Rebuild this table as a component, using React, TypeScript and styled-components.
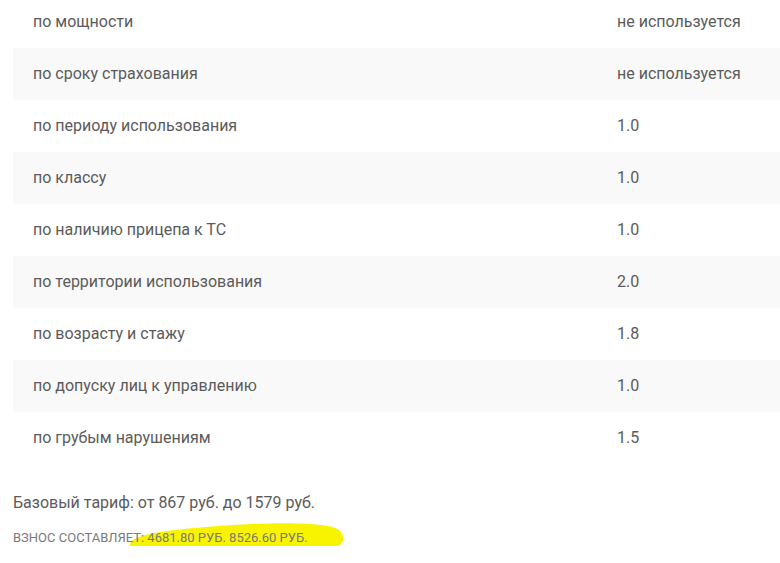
import React from 'react';
import styled, { createGlobalStyle } from "styled-components";

const rows = [
  { name: "по мощности", value: "не используется" },
  { name: "по сроку страхования", value: "не используется" },
  { name: "по периоду использования", value: "1.0" },
  { name: "по классу", value: "1.0" },
  { name: "по наличию прицепа к ТС", value: "1.0" },
  { name: "по территории использования", value: "2.0" },
  { name: "по возрасту и стажу", value: "1.8" },
  { name: "по допуску лиц к управлению", value: "1.0" },
  { name: "по грубым нарушениям", value: "1.5" },
];

const App = () => {
  return (
    <Page>
      <GlobalStyle/>
      <Table>
        <tbody>
          {rows.map((row, i) => (
            <Row key={row.name} $shaded={i % 2 === 1}>
              <NameCell>{row.name}</NameCell>
              <ValueCell>{row.value}</ValueCell>
            </Row>
          ))}
        </tbody>
      </Table>
      <BaseTariff>Базовый тариф: от 867 руб. до 1579 руб.</BaseTariff>
      <Total>
        {/* highlighter stroke drawn over the amount */}
        <Marker viewBox="0 0 216 32" preserveAspectRatio="none">
          <path
            d="M2 22 C 4 12, 40 8, 90 4 C 130 1, 175 0, 200 4 C 212 6, 216 12, 215 18 C 214 25, 205 28, 185 29 C 140 31, 80 32, 30 31 C 10 30, 1 28, 2 22 Z"
            fill="#f8f400"
          />
        </Marker>
        <TotalText>ВЗНОС СОСТАВЛЯЕТ: 4681.80 РУБ. 8526.60 РУБ.</TotalText>
      </Total>
    </Page>
  );
};

export default App;

const GlobalStyle = createGlobalStyle`
  body {
    margin: 0;
    background: #fff;
    font-family: Roboto, "Liberation Sans", sans-serif;
    overflow: hidden;
  }
`;

const Page = styled.div`
  padding: 0 0 0 13px;
  margin-top: -4px;
  color: #5b5b5b;
`;

const Table = styled.table`
  width: 100%;
  border-collapse: collapse;
  font-size: 16px;
`;

const Row = styled.tr<{ $shaded: boolean }>`
  height: 52px;
  background: ${p => (p.$shaded ? "#f9f9f9" : "#fff")};
`;

const NameCell = styled.td`
  width: 584px;
  padding: 0 0 2px 20px;
  vertical-align: middle;
`;

const ValueCell = styled.td`
  padding: 0 0 2px;
  vertical-align: middle;
`;

const BaseTariff = styled.div`
  margin-top: 27px;
  font-size: 16px;
  line-height: 24px;
`;

const Total = styled.div`
  position: relative;
  margin-top: 15px;
  font-size: 13px;
  line-height: 16px;
  text-transform: uppercase;
`;

const Marker = styled.svg`
  position: absolute;
  left: 115px;
  top: -8px;
  width: 216px;
  height: 32px;
`;

const TotalText = styled.span`
  position: relative;
  color: #7a7a7a;
`;
